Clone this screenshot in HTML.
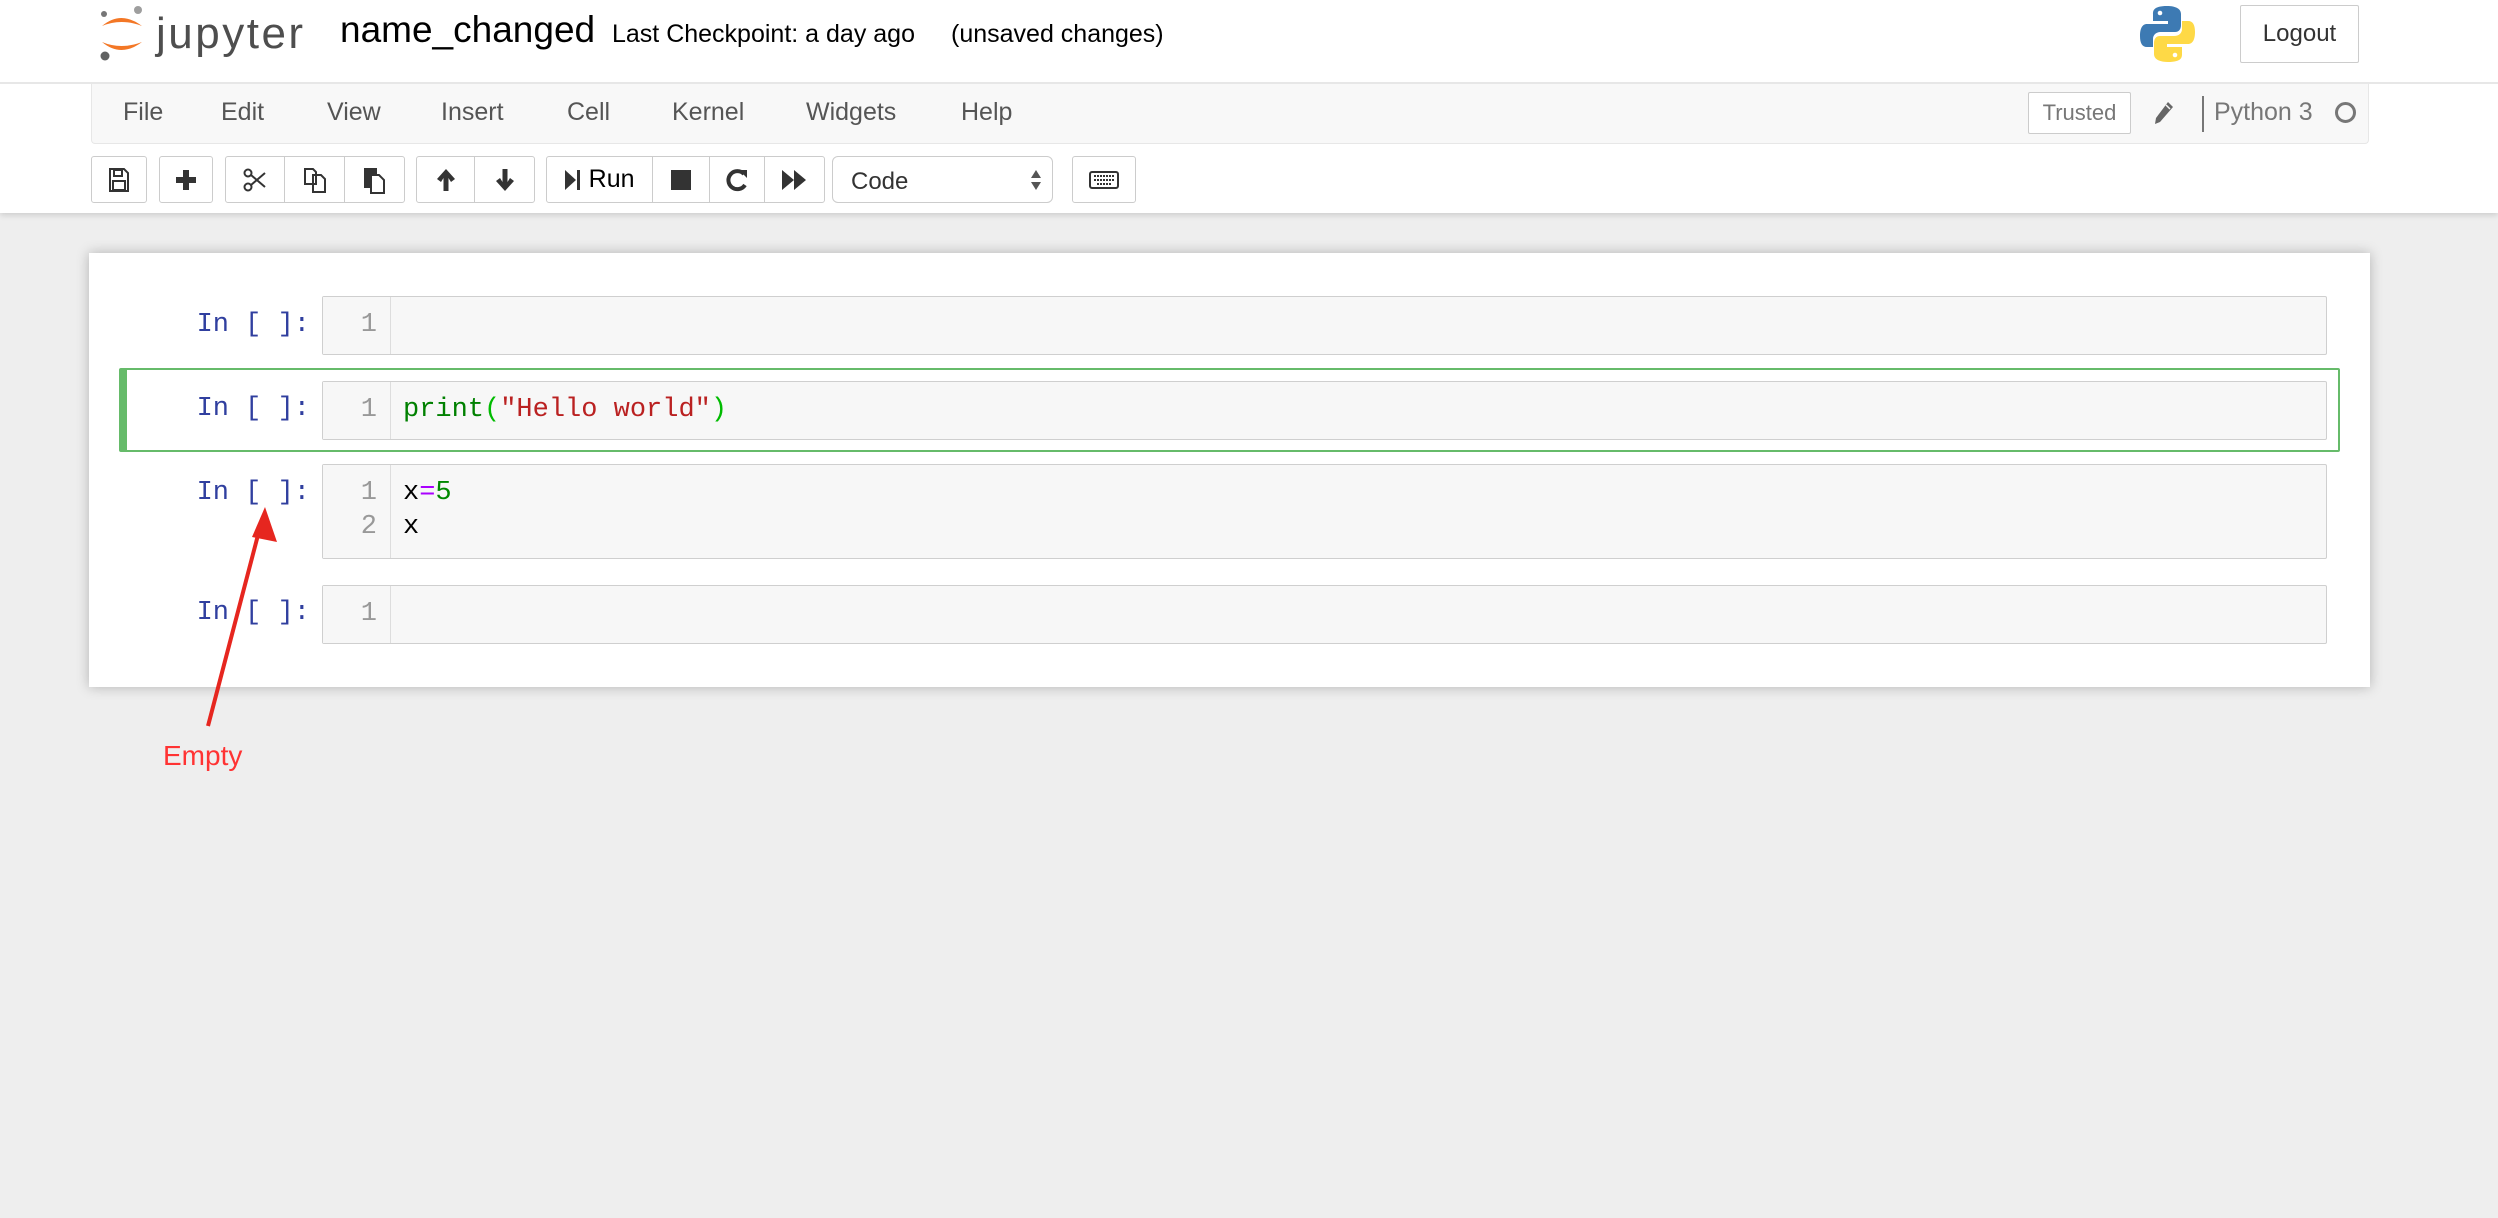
<!DOCTYPE html>
<html><head><meta charset="utf-8">
<style>
*{box-sizing:border-box;margin:0;padding:0}
body{width:2498px;height:1218px;background:#eeeeee;font-family:"Liberation Sans",sans-serif;position:relative;overflow:hidden}
.abs{position:absolute}
#header{left:0;top:0;width:2498px;height:213px;background:#fff;box-shadow:0 2px 6px rgba(0,0,0,.15)}
#hline{left:0;top:82px;width:2498px;height:2px;background:#e7e7e7}
#menubar{left:91px;top:84px;width:2278px;height:60px;background:#f8f8f8;border:1px solid #e7e7e7;border-top:none;border-radius:0 0 4px 4px}
.menu{top:98px;font-size:25px;color:#555}
.btn{top:156px;height:47px;border:1px solid #ccc;background:#fff;border-radius:3px;display:flex;align-items:center;justify-content:center;color:#333}
.grp{top:156px;height:47px;border:1px solid #ccc;border-radius:3px;background:#fff;display:flex}
.grp>div{height:100%;display:flex;align-items:center;justify-content:center;border-right:1px solid #ccc}
.grp>div:last-child{border-right:none}
#nb{left:89px;top:253px;width:2281px;height:434px;background:#fff;box-shadow:0 0 12px rgba(0,0,0,.25)}
.prompt{font-family:"Liberation Mono",monospace;font-size:27px;color:#303f9f;width:200px;text-align:right;left:110px}
.inp{left:322px;width:2005px;border:1px solid #cfcfcf;background:#f7f7f7;border-radius:2px}
.gut{position:absolute;left:0;top:0;bottom:0;width:68px;border-right:1px solid #ddd;background:#f7f7f7}
.ln{position:absolute;right:14px;font-family:"Liberation Mono",monospace;font-size:27px;color:#999}
.code{position:absolute;left:80px;font-family:"Liberation Mono",monospace;font-size:27px;color:#000}
</style></head><body>
<div id="header" class="abs"></div>
<div id="hline" class="abs"></div>
<svg class="abs" style="left:98px;top:4px" width="50" height="58" viewBox="0 0 50 58">
<circle cx="6" cy="10" r="3" fill="#767677"/><circle cx="40" cy="6" r="4" fill="#9e9e9e"/><circle cx="7" cy="52" r="4.5" fill="#616262"/>
<path d="M4 22 Q23 6 44 22 Q23 14 4 22Z" fill="#f37726"/>
<path d="M4 38 Q23 54 44 38 Q23 46 4 38Z" fill="#f37726"/>
</svg>
<div class="abs" style="left:156px;top:9px;font-size:44px;color:#4e4e4e;letter-spacing:2.5px">jupyter</div>
<div class="abs" style="left:340px;top:9px;font-size:37px;color:#000">name_changed</div>
<div class="abs" style="left:612px;top:20px;font-size:25px;color:#000">Last Checkpoint: a day ago</div>
<div class="abs" style="left:951px;top:20px;font-size:25px;color:#000">(unsaved changes)</div>
<svg class="abs" style="left:2139px;top:5px" width="57" height="58" viewBox="0 0 57 58">
<path d="M28 1 C14 1 14 6 14 9 V16 H29 V19 H8 C3 19 1 24 1 31 C1 38 3 42 8 42 H14 V34 C14 30 17 27 22 27 H36 C40 27 42 24 42 20 V9 C42 4 37 1 28 1Z" fill="#3d7ab3"/>
<circle cx="21" cy="8" r="2.3" fill="#fff"/>
<path d="M29 57 C43 57 43 52 43 49 V42 H28 V39 H49 C54 39 56 34 56 27 C56 20 54 16 49 16 H43 V24 C43 28 40 31 35 31 H21 C17 31 15 34 15 38 V49 C15 54 20 57 29 57Z" fill="#fed946"/>
<circle cx="36" cy="50" r="2.3" fill="#fff"/>
</svg>
<div class="abs" style="left:2240px;top:5px;width:119px;height:58px;border:1px solid #ccc;border-radius:2px;display:flex;align-items:center;justify-content:center;font-size:24px;color:#333">Logout</div>

<div id="menubar" class="abs"></div>
<div class="abs menu" style="left:123px">File</div>
<div class="abs menu" style="left:221px">Edit</div>
<div class="abs menu" style="left:327px">View</div>
<div class="abs menu" style="left:441px">Insert</div>
<div class="abs menu" style="left:567px">Cell</div>
<div class="abs menu" style="left:672px">Kernel</div>
<div class="abs menu" style="left:806px">Widgets</div>
<div class="abs menu" style="left:961px">Help</div>
<div class="abs" style="left:2028px;top:92px;width:103px;height:42px;border:1px solid #ccc;background:#fff;border-radius:2px;display:flex;align-items:center;justify-content:center;font-size:22px;color:#777">Trusted</div>
<svg class="abs" style="left:2153px;top:100px" width="22" height="26" viewBox="0 0 22 26"><path d="M15 2 L20 7 L7 22 L2 24 L3 18Z" fill="#666"/><path d="M13 5 L17 9" stroke="#f8f8f8" stroke-width="1.5"/></svg>
<div class="abs" style="left:2202px;top:96px;width:2px;height:36px;background:#777"></div>
<div class="abs" style="left:2214px;top:98px;font-size:25px;color:#777">Python 3</div>
<div class="abs" style="left:2335px;top:102px;width:21px;height:21px;border:3px solid #777;border-radius:50%"></div>

<div class="abs btn" style="left:91px;width:56px"><svg width="20" height="24" viewBox="0 0 20 24"><path d="M1 1 H15 L19 5 V23 H1Z" fill="none" stroke="#333" stroke-width="2"/><rect x="5" y="2" width="8" height="6" fill="none" stroke="#333" stroke-width="2"/><rect x="4" y="13" width="12" height="9" fill="none" stroke="#333" stroke-width="2"/></svg></div>
<div class="abs btn" style="left:159px;width:54px"><svg width="20" height="20" viewBox="0 0 20 20"><path d="M7 0h6v7h7v6h-7v7H7v-7H0V7h7z" fill="#333"/></svg></div>
<div class="abs grp" style="left:225px;width:180px">
<div style="width:60px"><svg width="24" height="24" viewBox="0 0 24 24" fill="none" stroke="#333" stroke-width="2"><circle cx="5" cy="5" r="3.5"/><circle cx="5" cy="19" r="3.5"/><path d="M8 7 L22 19 M8 17 L22 5"/></svg></div>
<div style="width:60px"><svg width="24" height="26" viewBox="0 0 24 26" fill="none" stroke="#333" stroke-width="2"><path d="M2 2h8l3 3v12H2z"/><path d="M10 8h8l4 4v13H10z"/></svg></div>
<div style="width:60px"><svg width="22" height="28" viewBox="0 0 22 28"><rect x="1" y="2" width="13" height="20" fill="#333"/><path d="M8 9h8l5 5v13H8z" fill="#fff" stroke="#333" stroke-width="2"/></svg></div>
</div>
<div class="abs grp" style="left:416px;width:119px">
<div style="width:59px"><svg width="20" height="24" viewBox="0 0 20 24"><path d="M10 1 L19 11 L15 14 L12.5 10 V23 H7.5 V10 L5 14 L1 11Z" fill="#333"/></svg></div>
<div style="width:60px"><svg width="20" height="24" viewBox="0 0 20 24"><path d="M10 23 L19 13 L15 10 L12.5 14 V1 H7.5 V14 L5 10 L1 13Z" fill="#333"/></svg></div>
</div>
<div class="abs grp" style="left:546px;width:279px">
<div style="width:107px;font-size:25px;gap:8px"><svg width="16" height="24" viewBox="0 0 16 24"><path d="M0 2 L11 12 L0 22Z" fill="#333"/><rect x="12" y="2" width="3" height="20" fill="#333"/></svg>Run</div>
<div style="width:57px"><div style="width:20px;height:20px;background:#333"></div></div>
<div style="width:56px"><svg width="22" height="24" viewBox="0 0 22 24"><path d="M18 6 A9 9 0 1 0 19 17" fill="none" stroke="#333" stroke-width="4"/><path d="M13 2 L21 2 L21 10Z" fill="#333"/></svg></div>
<div style="width:59px"><svg width="26" height="22" viewBox="0 0 26 22"><path d="M0 1 L12 11 L0 21Z M12 1 L24 11 L12 21Z" fill="#333"/></svg></div>
</div>
<div class="abs" style="left:832px;top:156px;width:221px;height:47px;border:1px solid #ccc;border-radius:6px;background:#fff;font-size:24px;color:#333;padding:11px 0 0 18px">Code<svg style="position:absolute;right:10px;top:12px" width="12" height="22" viewBox="0 0 12 22"><path d="M6 1 L11 9 H1Z M6 21 L11 13 H1Z" fill="#555"/></svg></div>
<div class="abs btn" style="left:1072px;width:64px"><svg width="30" height="18" viewBox="0 0 30 18"><rect x="1" y="1" width="28" height="16" rx="2" fill="none" stroke="#333" stroke-width="2"/><path d="M5 5h20M5 9h20M8 13h14" stroke="#333" stroke-width="2" stroke-dasharray="2 1"/></svg></div>

<div id="nb" class="abs"></div>
<div class="abs prompt" style="top:310px">In [ ]:</div>
<div class="abs inp" style="top:296px;height:59px"><div class="gut"></div><div class="ln" style="top:13px;left:0;width:54px;text-align:right">1</div></div>

<div class="abs" style="left:119px;top:368px;width:2221px;height:84px;border:2px solid #66bb6a;border-left:8px solid #66bb6a;border-radius:2px"></div>
<div class="abs prompt" style="top:394px">In [ ]:</div>
<div class="abs inp" style="top:381px;height:59px"><div class="gut"></div><div class="ln" style="top:13px;left:0;width:54px;text-align:right">1</div>
<div class="code" style="top:13px"><span style="color:#008000">print</span><span style="color:#0b0">(</span><span style="color:#ba2121">"Hello world"</span><span style="color:#0b0">)</span></div></div>

<div class="abs prompt" style="top:478px">In [ ]:</div>
<div class="abs inp" style="top:464px;height:95px"><div class="gut"></div><div class="ln" style="top:13px;left:0;width:54px;text-align:right">1</div><div class="ln" style="top:47px;left:0;width:54px;text-align:right">2</div>
<div class="code" style="top:13px">x<span style="color:#a0f">=</span><span style="color:#080">5</span></div><div class="code" style="top:47px">x</div></div>

<div class="abs prompt" style="top:598px">In [ ]:</div>
<div class="abs inp" style="top:585px;height:59px"><div class="gut"></div><div class="ln" style="top:13px;left:0;width:54px;text-align:right">1</div></div>

<svg class="abs" style="left:0;top:0" width="400" height="800" viewBox="0 0 400 800">
<path d="M208 726 L258 535" stroke="#e6261f" stroke-width="4"/>
<path d="M265 507 L277 542 L252 537Z" fill="#e6261f"/>
</svg>
<div class="abs" style="left:163px;top:740px;font-size:28px;color:#f33">Empty</div>
</body></html>
